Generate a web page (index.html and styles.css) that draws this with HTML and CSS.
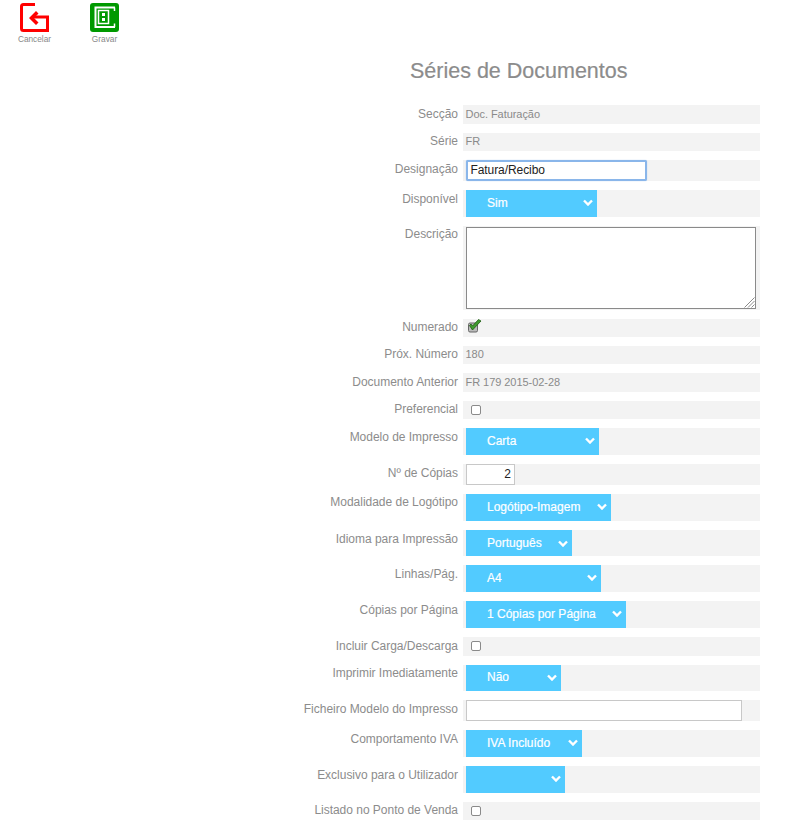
FILE: index.html
```html
<!DOCTYPE html>
<html lang="pt">
<head>
<meta charset="utf-8">
<title>Séries de Documentos</title>
<link rel="stylesheet" href="styles.css">
</head>
<body>
<header class="toolbar">
  <div class="tool">
    <svg class="tool-icon" viewBox="0 0 29 29" width="29" height="29">
      <path d="M15 1.500H3.500Q1.500 1.500 1.500 3.500V25.500Q1.500 27.500 3.500 27.500H27.500V14H12" fill="none" stroke="#f00" stroke-width="3"/>
      <path d="M9 15L16 8L18.500 10.500L14 15L18.500 19.500L16 22Z" fill="#f00"/>
    </svg>
    <span>Cancelar</span>
  </div>
  <div class="tool">
    <svg class="tool-icon" viewBox="0 0 29 29" width="29" height="29">
      <rect width="29" height="29" rx="3" fill="#090"/>
      <path d="M25 4.500H5.500V24H25" fill="none" stroke="#fff" stroke-width="2"/>
      <path d="M24.500 4.500V8M24.500 20.500V24" fill="none" stroke="#fff" stroke-width="1.500"/>
      <rect x="8.500" y="7.500" width="10" height="13" fill="none" stroke="#fff" stroke-width="1.500"/>
      <rect x="12" y="10" width="3" height="3" fill="#fff"/>
      <rect x="12" y="15" width="3" height="3" fill="#fff"/>
    </svg>
    <span>Gravar</span>
  </div>
</header>
<main class="form">
  <h1 class="title">Séries de Documentos</h1>

  <div class="row h19"><label>Secção</label><div class="field ro">Doc. Faturação</div></div>
  <div class="row h18"><label class="up">Série</label><div class="field ro ro-up">FR</div></div>
  <div class="row h21"><label>Designação</label><div class="field inset"><input class="text focus" type="text" value="Fatura/Recibo"></div></div>
  <div class="row h27"><label>Disponível</label><div class="field inset"><div class="select w131"><span>Sim</span><svg class="chev" viewBox="0 0 10 7" width="10" height="7"><path d="M1 1.500L5 5.500L9 1.500" fill="none" stroke="#fff" stroke-width="2.400"/></svg></div></div></div>
  <div class="row h84"><label class="up">Descrição</label><div class="field inset area-wrap"><textarea class="area"></textarea>
    <svg class="grip" viewBox="0 0 11 11" width="11" height="11"><path d="M0.500 10.500L10.500 0.500M4 10.500L10.500 4M7.500 10.500L10.500 7.500" fill="none" stroke="#8a8a8a" stroke-width="1"/></svg></div></div>
  <div class="row h18"><label class="up">Numerado</label><div class="field inset">
    <svg class="check" viewBox="0 0 15 14" width="15" height="14">
      <rect x="1.500" y="4" width="9" height="9" rx="1.500" fill="#bbb" stroke="#666"/>
      <path d="M2.500 6.500L5.500 11L14 2L11.500 0.500L5.500 7L4 5Z" fill="#3f9a2e" stroke="#1d5c12" stroke-width="0.800"/>
    </svg></div></div>
  <div class="row h18"><label class="up">Próx. Número</label><div class="field ro ro-up">180</div></div>
  <div class="row h19"><label>Documento Anterior</label><div class="field ro">FR 179 2015-02-28</div></div>
  <div class="row h18"><label class="up">Preferencial</label><div class="field inset"><span class="box"></span></div></div>
  <div class="row h27"><label>Modelo de Impresso</label><div class="field inset"><div class="select w133"><span>Carta</span><svg class="chev" viewBox="0 0 10 7" width="10" height="7"><path d="M1 1.500L5 5.500L9 1.500" fill="none" stroke="#fff" stroke-width="2.400"/></svg></div></div></div>
  <div class="row h21"><label>Nº de Cópias</label><div class="field inset"><input class="text num" type="text" value="2"></div></div>
  <div class="row h27"><label class="up">Modalidade de Logótipo</label><div class="field inset"><div class="select w145"><span>Logótipo-Imagem</span><svg class="chev" viewBox="0 0 10 7" width="10" height="7"><path d="M1 1.500L5 5.500L9 1.500" fill="none" stroke="#fff" stroke-width="2.400"/></svg></div></div></div>
  <div class="row h26"><label>Idioma para Impressão</label><div class="field inset"><div class="select w106"><span>Português</span><svg class="chev" viewBox="0 0 10 7" width="10" height="7"><path d="M1 1.500L5 5.500L9 1.500" fill="none" stroke="#fff" stroke-width="2.400"/></svg></div></div></div>
  <div class="row h27"><label>Linhas/Pág.</label><div class="field inset"><div class="select w135"><span>A4</span><svg class="chev" viewBox="0 0 10 7" width="10" height="7"><path d="M1 1.500L5 5.500L9 1.500" fill="none" stroke="#fff" stroke-width="2.400"/></svg></div></div></div>
  <div class="row h27"><label>Cópias por Página</label><div class="field inset"><div class="select w160"><span>1 Cópias por Página</span><svg class="chev" viewBox="0 0 10 7" width="10" height="7"><path d="M1 1.500L5 5.500L9 1.500" fill="none" stroke="#fff" stroke-width="2.400"/></svg></div></div></div>
  <div class="row h19"><label>Incluir Carga/Descarga</label><div class="field inset"><span class="box"></span></div></div>
  <div class="row h26"><label class="up">Imprimir Imediatamente</label><div class="field inset"><div class="select w95"><span>Não</span><svg class="chev" viewBox="0 0 10 7" width="10" height="7"><path d="M1 1.500L5 5.500L9 1.500" fill="none" stroke="#fff" stroke-width="2.400"/></svg></div></div></div>
  <div class="row h21"><label>Ficheiro Modelo do Impresso</label><div class="field inset"><input class="text file" type="text"></div></div>
  <div class="row h27"><label>Comportamento IVA</label><div class="field inset"><div class="select w116"><span>IVA Incluído</span><svg class="chev" viewBox="0 0 10 7" width="10" height="7"><path d="M1 1.500L5 5.500L9 1.500" fill="none" stroke="#fff" stroke-width="2.400"/></svg></div></div></div>
  <div class="row h27"><label>Exclusivo para o Utilizador</label><div class="field inset"><div class="select w99"><span></span><svg class="chev" viewBox="0 0 10 7" width="10" height="7"><path d="M1 1.500L5 5.500L9 1.500" fill="none" stroke="#fff" stroke-width="2.400"/></svg></div></div></div>
  <div class="row h18"><label class="up">Listado no Ponto de Venda</label><div class="field inset"><span class="box"></span></div></div>
</main>
</body>
</html>
```

FILE: styles.css
```css
* { box-sizing: border-box; }
html, body { margin: 0; padding: 0; background: #fff; }
body { font-family: "Liberation Sans", Arial, sans-serif; font-size: 12px; color: #8a8a8a; height: 832px; overflow: hidden; }

.toolbar { display: flex; height: 56px; padding: 3px 0 0 18px; gap: 37px; }
.tool { width: 33px; display: flex; flex-direction: column; align-items: center; font-size: 8.300px; color: #888; line-height: 10px; }
.tool-icon { display: block; margin-bottom: 2px; }

.form { width: 760px; }
.title { margin: 0 0 20px; height: 29px; width: 100%; padding-left: 410px; font-size: 21.500px; line-height: 30px; font-weight: 400; color: #8c8c8c; -webkit-text-stroke: 0.2px #8c8c8c; white-space: nowrap; }

.row { display: flex; margin-bottom: 9px; }
.row label { width: 458px; margin-right: 5px; flex: none; text-align: right; line-height: 18px; white-space: nowrap; color: #8c8c8c; letter-spacing: -0.020px; }
.row .up { line-height: 16px; }
.field { width: 297px; flex: none; background: #f3f3f3; display: flex; align-items: flex-start; }
.ro { font-size: 11px; line-height: 18px; padding-left: 2.500px; color: #8a8a8a; letter-spacing: -0.050px; }
.ro-up { line-height: 17px; }
.inset { padding-left: 3px; }

.h18 { height: 18px; }
.h19 { height: 19px; }
.h21 { height: 21px; }
.h26 { height: 26px; }
.h27 { height: 27px; }
.h84 { height: 84px; }

.text { display: block; height: 21px; border: 1px solid #c8c8c8; background: #fff; font: 12px "Liberation Sans", Arial, sans-serif; color: #222; padding: 0 3px 1px; margin: 0; outline: none; border-radius: 0; }
.focus { width: 181px; border: 2px solid #8ab6ea; border-radius: 2px; padding: 0 3px 2px 2px; box-shadow: 0 0 1px #8ab6ea; letter-spacing: -0.080px; text-indent: 0.500px; }
.num { width: 49px; text-align: right; }
.file { width: 276px; }

.area-wrap { position: relative; }
.area { display: block; width: 290px; height: 82px; margin: 1px 0 0; border: 1px solid #8a8a8a; background: #fff; padding: 2px; outline: none; border-radius: 0; resize: none; }
.grip { position: absolute; right: 5px; bottom: 2px; }

.select { height: 100%; background: #52cbff; color: #fff; display: flex; align-items: center; justify-content: space-between; padding: 0 4px 2px 21px; font-size: 12px; }
.select span { -webkit-text-stroke: 0.2px #fff; white-space: nowrap; }
.w95 { width: 95px; }
.w99 { width: 99px; }
.w106 { width: 106px; padding-bottom: 0; }
.w116 { width: 116px; }
.w131 { width: 131px; }
.w133 { width: 133px; }
.w135 { width: 135px; }
.w145 { width: 145px; }
.w160 { width: 160px; }

.chev { flex: none; }
.box { display: block; width: 10px; height: 10px; margin: 4px 0 0 5px; border: 1px solid #8a8a8a; border-radius: 2px; background: #fff; }
.check { display: block; margin: 0 0 0 1px; }
```
